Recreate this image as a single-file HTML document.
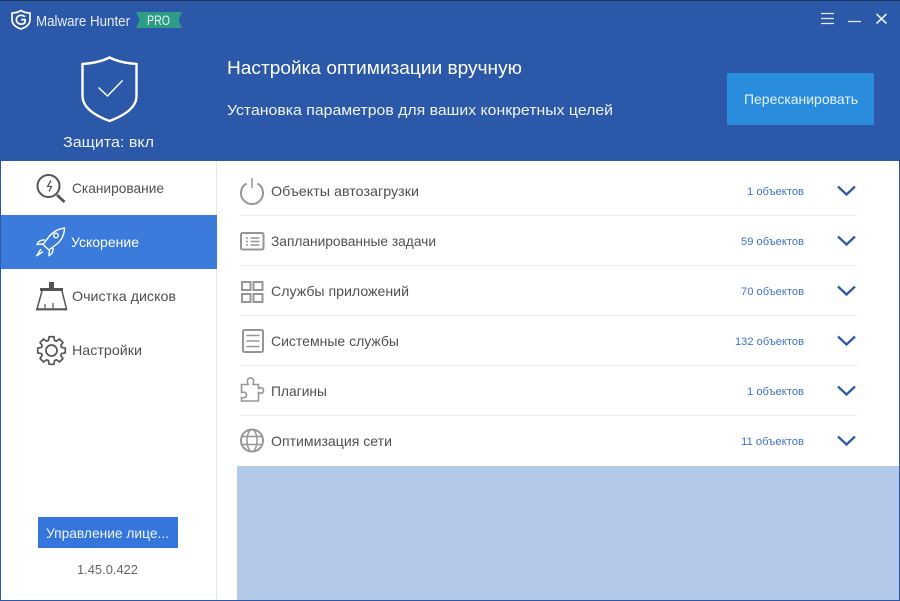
<!DOCTYPE html>
<html lang="ru"><head><meta charset="utf-8"><title>Malware Hunter</title>
<style>
html,body{margin:0;padding:0;width:900px;height:601px;overflow:hidden;background:#fff}
svg{display:block}
text{font-family:"Liberation Sans","DejaVu Sans",sans-serif}
.m{fill:#505050;font-size:14px}
.c{fill:#3f73c4;font-size:11px}
</style></head><body>
<svg width="900" height="601" viewBox="0 0 900 601" xmlns="http://www.w3.org/2000/svg">
<rect width="900" height="601" fill="#fff"/>
<rect width="900" height="161" fill="#2b58a8"/>
<rect width="900" height="1" fill="#1d3460"/>
<rect x="0" y="161" width="1" height="440" fill="#2b58a8"/>
<rect x="899" y="161" width="1" height="440" fill="#2b58a8"/>
<rect x="0" y="600" width="900" height="1" fill="#2b58a8"/>
<rect x="216" y="161" width="1" height="439" fill="#e8e8e8"/>
<rect x="237" y="466" width="662" height="134" fill="#b4c9e9"/>
<rect x="1" y="215" width="216" height="54" fill="#3b7bdb"/>

<!-- logo -->
<path d="M21 10.500c2.600 1.800 5.200 2.300 9 2.600v6.400c0 4.600-3.400 7.600-9 9.500-5.600-1.900-9-4.900-9-9.500v-6.400c3.800-.3 6.400-.8 9-2.600z" fill="none" stroke="#fff" stroke-width="1.700"/>
<path d="M25 16.800c-1-1-2.400-1.500-3.900-1.500-2.800 0-4.700 1.900-4.700 4.400s1.900 4.400 4.700 4.400c1.500 0 2.900-.5 3.900-1.500v-3h-3.900" fill="none" stroke="#fff" stroke-width="1.700"/>
<text x="36" y="26" fill="#e6edf8" font-size="14.500" textLength="94" lengthAdjust="spacingAndGlyphs">Malware Hunter</text>
<path d="M136 12h46l-3.500 8 3.500 8h-46l3.500-8z" fill="#2e9c86"/>
<text x="147" y="25" fill="#e8f4f0" font-size="13.500" textLength="23" lengthAdjust="spacingAndGlyphs">PRO</text>

<!-- window controls -->
<path d="M821 13.500h13M821 18.500h13M821 23.500h13" stroke="#e4ecf8" stroke-width="1.200" fill="none"/>
<path d="M848 21.500h13" stroke="#e4ecf8" stroke-width="1.300" fill="none"/>
<path d="M876.500 14l10 9.500M886.500 14l-10 9.500" stroke="#e8eef9" stroke-width="1.600" fill="none"/>

<!-- shield -->
<path d="M109.500 57.500c7.500 3.900 15.500 5.600 27 6.500v32c0 10.500-9.500 18.500-27 25-17.500-6.500-27-14.500-27-25v-32c11.500-.9 19.500-2.600 27-6.500z" fill="none" stroke="#fff" stroke-width="2.400"/>
<path d="M98.500 87.500l9 8.500 15-15.500" fill="none" stroke="#fff" stroke-width="1.500"/>
<text x="63" y="147" fill="#eef3fb" font-size="15" textLength="91" lengthAdjust="spacingAndGlyphs">Защита: вкл</text>

<!-- header text -->
<text x="227" y="74" fill="#fff" font-size="18" textLength="295" lengthAdjust="spacingAndGlyphs">Настройка оптимизации вручную</text>
<text x="227" y="115" fill="#f0f4fb" font-size="15" textLength="386" lengthAdjust="spacingAndGlyphs">Установка параметров для ваших конкретных целей</text>
<rect x="727" y="73" width="147" height="52" rx="1" fill="#2a8cdc"/>
<text x="744" y="104" fill="#e6f2fc" font-size="14" textLength="114" lengthAdjust="spacingAndGlyphs">Пересканировать</text>

<!-- sidebar -->
<circle cx="48.500" cy="186" r="11" fill="none" stroke="#555" stroke-width="2"/>
<path d="M57 195l7.500 7" stroke="#555" stroke-width="2.800" fill="none"/>
<path d="M51 180.500l-3.500 6h4l-2.500 5" stroke="#555" stroke-width="1.300" fill="none"/>
<text class="m" x="72" y="193" textLength="92" lengthAdjust="spacingAndGlyphs">Сканирование</text>

<g fill="none" stroke="#fff" stroke-width="1.400">
<path d="M64.500 228c-6 .8-11 3.500-15 8l-6.500 8.500 6 5.500 8.500-6.500c4.500-4 6.800-9.500 7-15.500z"/>
<circle cx="56" cy="235.500" r="2.300"/>
<path d="M45 240c-4-.5-6.500 1-8 4.500l6-.5M53 248c.5 4-1 6-4 7.500l.5-5.500M41 249l-4.500 7 6.500-4.500"/>
</g>
<text x="71" y="247" fill="#fff" font-size="14" textLength="68" lengthAdjust="spacingAndGlyphs">Ускорение</text>

<rect x="49" y="282" width="5" height="7" fill="#555"/>
<rect x="40" y="288" width="23" height="3" fill="#555"/>
<path d="M42 291l-5 18h29.500l-4.500-18" fill="none" stroke="#555" stroke-width="1.500"/>
<path d="M36 309.500h31" stroke="#555" stroke-width="1.800"/>
<path d="M45 309v-5M53 309v-6" stroke="#777" stroke-width="1.500"/>
<text class="m" x="72" y="301" textLength="104" lengthAdjust="spacingAndGlyphs">Очистка дисков</text>

<polygon transform="translate(51.500,350.500)" points="-2.430,-13.790 2.430,-13.790 3.070,-10.040 4.930,-9.270 8.030,-11.470 11.470,-8.030 9.270,-4.930 10.040,-3.070 13.790,-2.430 13.790,2.430 10.040,3.070 9.270,4.930 11.470,8.030 8.030,11.470 4.930,9.270 3.070,10.040 2.430,13.790 -2.430,13.790 -3.070,10.040 -4.930,9.270 -8.030,11.470 -11.470,8.030 -9.270,4.930 -10.040,3.070 -13.790,2.430 -13.790,-2.430 -10.040,-3.070 -9.270,-4.930 -11.470,-8.030 -8.030,-11.470 -4.930,-9.270 -3.070,-10.040" fill="none" stroke="#555" stroke-width="1.700" stroke-linejoin="round"/>
<circle cx="51.500" cy="350.500" r="5.500" fill="none" stroke="#555" stroke-width="1.700"/>
<text class="m" x="72" y="355" textLength="70" lengthAdjust="spacingAndGlyphs">Настройки</text>

<rect x="38" y="517" width="140" height="31" fill="#3576dc"/>
<text x="46" y="538" fill="#eef4fd" font-size="14" textLength="123" lengthAdjust="spacingAndGlyphs">Управление лице...</text>
<text x="77" y="574" fill="#666" font-size="12.500" textLength="61" lengthAdjust="spacingAndGlyphs">1.45.0.422</text>

<!-- separators -->
<path d="M240 215.500h617M240 265.500h617M240 315.500h617M240 365.500h617M240 415.500h617" stroke="#eeeeee" stroke-width="1"/>

<!-- row icons -->
<g fill="none" stroke="#969696" stroke-width="2">
<path d="M246.500 183.500a11 11 0 1 0 11 0"/>
<path d="M252 178v10" stroke-width="1.500"/>
<rect x="241" y="233" width="22.500" height="16.500" rx="1.500"/>
<path d="M246 238h2M246 241.500h2M246 245h2M250.500 238h9M250.500 241.500h9M250.500 245h9" stroke-width="1.500"/>
<rect x="242" y="282" width="8.500" height="8"/><rect x="253.500" y="282" width="9" height="8"/>
<rect x="242" y="294" width="8.500" height="8"/><rect x="253.500" y="294" width="9" height="8"/>
<rect x="243" y="330" width="20" height="22" rx="1.500"/>
<path d="M246.500 335.500h13M246.500 341h13M246.500 346.500h13" stroke-width="1.500"/>
<path d="M241.500 384.500h6.500c-1.500-4.500 0-6.500 2.500-6.500s4 2 2.500 6.500h5.500v4c3-1.500 5-.5 5 2s-2 3.500-5 2v8.500h-17v-3.500c3.500 1 5-.5 5-2.500s-1.500-3.500-5-2.500z" stroke-width="1.600"/>
<circle cx="252" cy="440.500" r="11"/>
<ellipse cx="252" cy="440.500" rx="5" ry="11" stroke-width="1.500"/>
<path d="M242.500 436.500h19M242.500 444.500h19" stroke-width="1.500"/>
</g>

<!-- row labels -->
<g class="rows">
<text class="m" x="271" y="196" textLength="148" lengthAdjust="spacingAndGlyphs">Объекты автозагрузки</text>
<text class="m" x="271" y="246" textLength="165" lengthAdjust="spacingAndGlyphs">Запланированные задачи</text>
<text class="m" x="271" y="296" textLength="138" lengthAdjust="spacingAndGlyphs">Службы приложений</text>
<text class="m" x="271" y="346" textLength="128" lengthAdjust="spacingAndGlyphs">Системные службы</text>
<text class="m" x="271" y="396" textLength="56" lengthAdjust="spacingAndGlyphs">Плагины</text>
<text class="m" x="271" y="446" textLength="121" lengthAdjust="spacingAndGlyphs">Оптимизация сети</text>
</g>

<!-- counts -->
<text class="c" x="747" y="195" textLength="57" lengthAdjust="spacingAndGlyphs">1 объектов</text>
<text class="c" x="741" y="245" textLength="63" lengthAdjust="spacingAndGlyphs">59 объектов</text>
<text class="c" x="741" y="295" textLength="63" lengthAdjust="spacingAndGlyphs">70 объектов</text>
<text class="c" x="735" y="345" textLength="69" lengthAdjust="spacingAndGlyphs">132 объектов</text>
<text class="c" x="747" y="395" textLength="57" lengthAdjust="spacingAndGlyphs">1 объектов</text>
<text class="c" x="741" y="445" textLength="63" lengthAdjust="spacingAndGlyphs">11 объектов</text>

<!-- chevrons -->
<g fill="none" stroke="#2f5aa5" stroke-width="2.300">
<path d="M838 186.500l8.500 8 8.500-8"/>
<path d="M838 236.500l8.500 8 8.500-8"/>
<path d="M838 286.500l8.500 8 8.500-8"/>
<path d="M838 336.500l8.500 8 8.500-8"/>
<path d="M838 386.500l8.500 8 8.500-8"/>
<path d="M838 436.500l8.500 8 8.500-8"/>
</g>
</svg>
</body></html>
